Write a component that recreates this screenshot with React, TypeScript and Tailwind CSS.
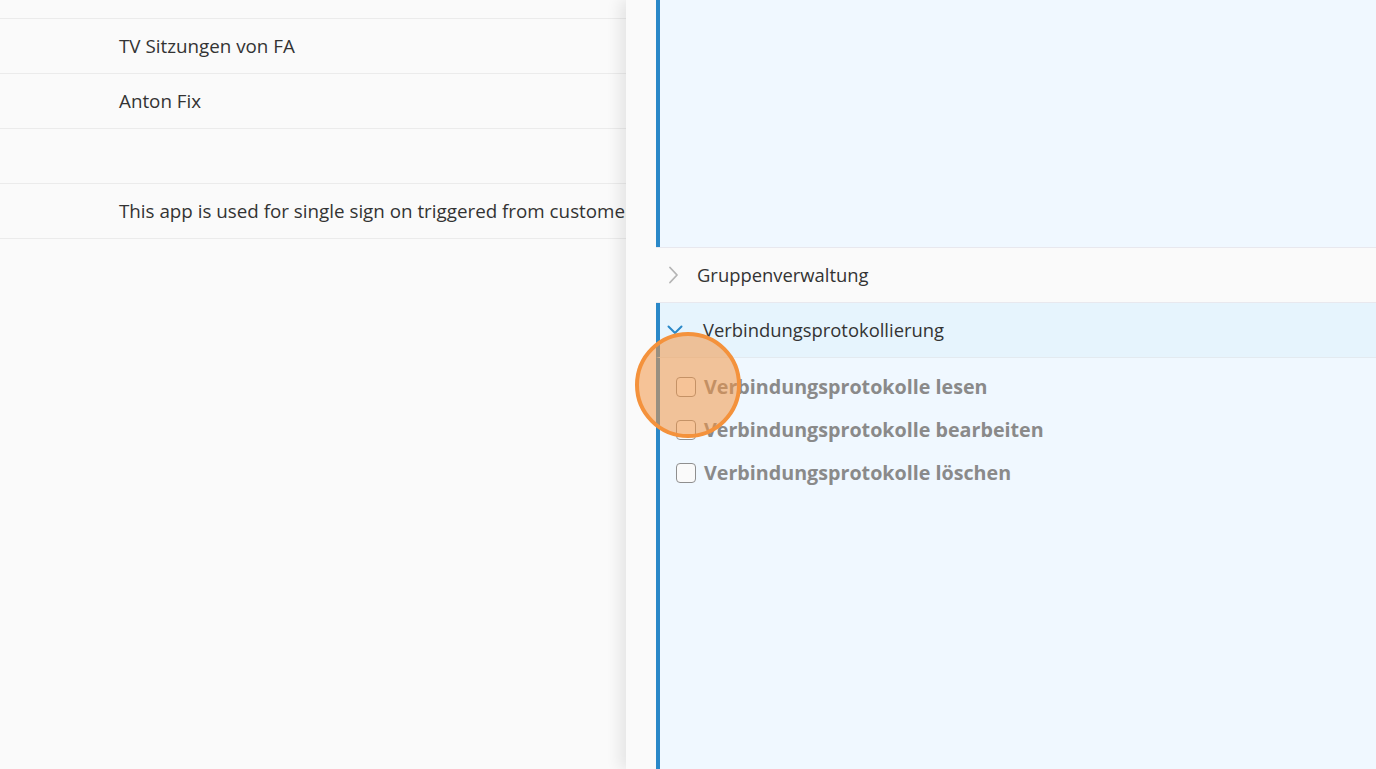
import React from 'react'

const rows = ['TV Sitzungen von FA', 'Anton Fix', '', 'This app is used for single sign on triggered from customer']

const perms = ['Verbindungsprotokolle lesen', 'Verbindungsprotokolle bearbeiten', 'Verbindungsprotokolle löschen']

function ChevronRight() {
	return (
		<svg width="11" height="18" viewBox="0 0 11 18" fill="none">
			<polyline points="2,1.5 9,9 2,16.5" stroke="#b4b4b4" strokeWidth="1.8" strokeLinecap="round" strokeLinejoin="round" />
		</svg>
	)
}

function ChevronDown() {
	return (
		<svg width="16" height="10" viewBox="0 0 16 10" fill="none">
			<polyline points="1.5,1.5 8,8 14.5,1.5" stroke="#2a88c8" strokeWidth="2" strokeLinecap="round" strokeLinejoin="round" />
		</svg>
	)
}

export default function App() {
	return (
		<div className="relative flex h-[769px] w-[1376px] overflow-hidden bg-[#fafafa] font-['Open_Sans',sans-serif] text-[18.4px] text-[#333]">
			{/* Liste im Hintergrund */}
			<div className="w-[626px] shrink-0 overflow-hidden text-[18.8px]">
				<div className="h-[19px] border-b border-[#ebebeb]" />
				{rows.map((r, i) => (
					<div key={i} className="flex h-[55px] items-center border-b border-[#ebebeb] pl-[119px] whitespace-nowrap">
						{r}
					</div>
				))}
			</div>

			{/* Seitenpanel */}
			<div className="relative flex flex-1 flex-col bg-[#fafafa] pl-[30px] shadow-[-6px_0_14px_rgba(0,0,0,0.09)]">
				<div className="h-[247px] shrink-0 border-l-4 border-[#2a88c8] bg-[#f0f8ff]" />

				<div className="flex h-[56px] shrink-0 items-center border-y border-[#e8e8ee] bg-[#fafafa] pl-[12px]">
					<ChevronRight />
					<span className="ml-[18px]">Gruppenverwaltung</span>
				</div>

				<div className="flex h-[55px] shrink-0 items-center border-b border-[#e3eaf0] border-l-4 border-l-[#2a88c8] bg-[#e6f4fd] pl-[7px]">
					<ChevronDown />
					<span className="ml-[20px]">Verbindungsprotokollierung</span>
				</div>

				<div className="flex flex-1 flex-col gap-[23px] border-l-4 border-[#2a88c8] bg-[#f0f8ff] pl-[16px] pt-[19px]">
					{perms.map((p) => (
						<label key={p} className="flex items-center gap-[8px] text-[19.7px] font-bold text-[#8a8a8a]">
							<span className="h-[20px] w-[20px] shrink-0 rounded-[4px] border border-[#8f8f8f] bg-[#fafafa]" />
							<span className="leading-[20px]">{p}</span>
						</label>
					))}
				</div>
			</div>

			{/* Klick-Markierung */}
			<div className="pointer-events-none absolute left-[635px] top-[332px] h-[106px] w-[106px] rounded-full border-4 border-[#f4923c] bg-[rgba(243,150,70,0.55)]" />
		</div>
	)
}
